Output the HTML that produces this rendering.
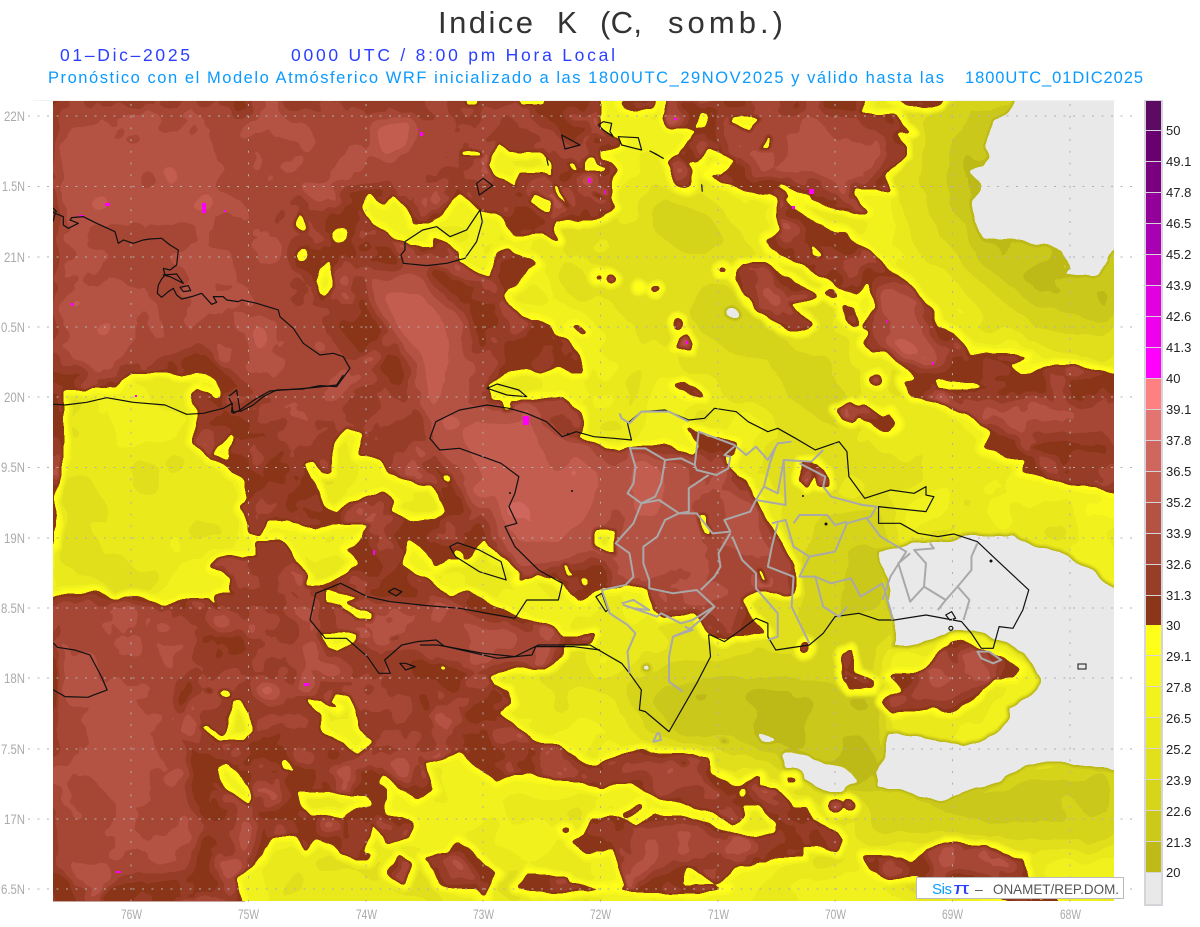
<!DOCTYPE html>
<html><head><meta charset="utf-8"><title>Indice K</title>
<style>
html,body{margin:0;padding:0;background:#fff}
svg{display:block}
.c{fill:none;stroke:#111;stroke-width:1.2;vector-effect:non-scaling-stroke;stroke-linejoin:round}
.g{fill:none;stroke:#a9a9a9;stroke-width:2;vector-effect:non-scaling-stroke;stroke-linejoin:round}
text{font-family:"Liberation Sans",sans-serif}
.ax{font-size:14px;fill:#aaa}
.cb{font-size:13px;fill:#222}
</style></head><body>
<svg width="1200" height="927" viewBox="0 0 1200 927" xmlns="http://www.w3.org/2000/svg">
<defs>
<clipPath id="mc"><rect x="53" y="101" width="1061" height="800"/></clipPath>
<filter id="post" filterUnits="userSpaceOnUse" x="0" y="0" width="1200" height="927" color-interpolation-filters="sRGB">
<feTurbulence type="fractalNoise" baseFrequency=".04" numOctaves="3" seed="3" result="n"/>
<feDisplacementMap in="SourceGraphic" in2="n" scale="9" xChannelSelector="R" yChannelSelector="G"/>
<feGaussianBlur stdDeviation="1.5"/>
<feComponentTransfer>
<feFuncR type="discrete" tableValues=".914 .745 .796 .843 .886 .914 .949 .973 1 .545 .596 .651 .706 .761 .816 .886"/>
<feFuncG type="discrete" tableValues=".914 .733 .788 .835 .878 .914 .949 .973 1 .208 .243 .282 .325 .365 .404 .459"/>
<feFuncB type="discrete" tableValues=".914 .094 .102 .102 .106 .110 .114 .110 .102 .098 .153 .208 .263 .314 .369 .439"/>
<feFuncA type="linear" slope="0" intercept="1"/>
</feComponentTransfer>
</filter>
<filter id="bF" filterUnits="userSpaceOnUse" x="0" y="0" width="1200" height="927" color-interpolation-filters="sRGB"><feGaussianBlur stdDeviation="10"/></filter>
<filter id="bB" filterUnits="userSpaceOnUse" x="0" y="0" width="1200" height="927" color-interpolation-filters="sRGB"><feGaussianBlur stdDeviation="5.5"/></filter>
<filter id="nB" filterUnits="userSpaceOnUse" x="0" y="0" width="1200" height="927" color-interpolation-filters="sRGB">
<feTurbulence type="fractalNoise" baseFrequency=".028" numOctaves="3" seed="7"/>
<feColorMatrix type="matrix" values="0 0 0 0 .82  0 0 0 0 .82  0 0 0 0 .82  2.2 0 0 0 -.95"/>
</filter>
<filter id="nF" filterUnits="userSpaceOnUse" x="0" y="0" width="1200" height="927" color-interpolation-filters="sRGB">
<feTurbulence type="fractalNoise" baseFrequency=".02" numOctaves="2" seed="11"/>
<feColorMatrix type="matrix" values="0 0 0 0 .22  0 0 0 0 .22  0 0 0 0 .22  1.5 0 0 0 -.6"/>
</filter>

<g id="B">
<polygon points="30,90 600,90 600,108 599,128 610,137 620,140 620,147 600,150 600,158 613,163 618,169 613,174 610,198 613,208 603,217 578,222 557,220 553,227 558,240 540,230 515,235 500,215 480,210 462,195 453,198 430,223 413,223 408,208 390,193 383,205 370,193 360,208 372,225 390,235 405,242 410,247 435,247 435,237 458,252 458,263 490,280 498,252 508,250 535,265 503,295 512,308 520,318 550,325 555,335 568,340 578,355 583,372 573,374 557,365 543,372 528,367 510,373 487,383 492,400 510,402 562,398 580,412 580,433 576,438 617,453 633,447 665,445 693,458 700,445 687,427 708,435 736,443 732,455 728,468 748,483 756,503 772,527 795,567 793,593 756,590 742,600 752,618 768,633 736,637 724,642 708,630 693,612 661,617 651,607 651,590 625,585 596,590 578,600 564,588 556,580 535,573 519,580 523,573 501,557 485,538 467,562 450,558 437,568 420,545 407,538 402,565 413,575 427,578 450,597 470,592 489,603 503,610 535,622 552,627 562,638 594,633 590,642 564,645 564,653 546,668 509,668 486,677 494,688 511,692 513,703 499,713 530,740 560,748 585,762 599,765 631,752 642,750 667,755 683,753 708,760 712,773 739,785 758,777 760,787 774,788 792,807 808,805 812,820 778,823 760,807 740,805 742,817 731,825 714,813 664,798 631,783 599,788 555,777 517,773 496,782 459,753 425,760 432,790 417,800 400,790 383,773 378,785 387,790 387,813 413,823 409,835 387,842 373,823 362,850 371,855 367,862 342,853 330,845 318,837 306,850 298,833 272,835 260,860 233,877 245,905 30,905"/>
<polygon points="571,843 587,833 590,820 621,817 637,827 656,813 678,815 717,827 746,837 774,835 778,820 812,820 835,832 842,838 835,850 803,845 803,858 774,858 753,865 739,867 717,883 688,865 680,885 728,887 700,893 660,893 615,887 628,888 612,848 589,853"/>
<polygon points="621,813 640,803 642,807 625,817"/>
<polygon points="560,877 571,887 606,887 581,892 560,890"/>
<polygon points="515,888 528,873 566,878 570,885 600,888 551,893"/>
<polygon points="423,860 448,853 459,840 497,873 486,897 470,890 440,883"/>
<polygon points="387,872 398,857 409,866 404,882"/>
<polygon points="864,855 903,858 912,865 928,850 946,845 981,847 1024,858 1028,877 1028,905 917,877 889,880 867,867"/>
<polygon points="1031,899 1056,899 1058,905 1031,905"/>
<ellipse cx="835" cy="806" rx="6" ry="6"/><ellipse cx="849" cy="805" rx="5" ry="5"/>
<rect x="788" y="777" width="7" height="5"/>
<ellipse cx="565" cy="831" rx="4" ry="2.5"/>
<polygon points="620,101 655,101 650,108 635,111 622,108"/>
<polygon points="893,96 945,96 940,105 925,107 905,106"/>
<polygon points="668,96 866,96 860,112 895,115 910,133 895,132 905,148 905,158 885,175 890,192 855,188 853,195 868,212 852,212 817,202 790,197 780,198 717,182 707,175 715,167 727,170 723,155 707,145 707,130 697,130 670,127 663,118"/>
<polygon points="680,155 697,132 710,130 707,145 700,163 688,165"/>
<polygon points="667,163 678,157 692,170 690,187 678,185"/>
<polygon points="780,190 788,202 797,210 810,218 825,228 847,232 868,252 897,275 913,292 933,312 937,327 955,332 970,355 987,352 1028,358 1010,365 993,358 1020,375 1067,363 1120,378 1120,495 1022,472 1027,462 983,448 992,433 970,415 913,395 902,380 918,378 887,352 873,352 862,343 870,328 862,327 877,308 870,282 857,295 838,288 807,265 780,257 765,240 780,233"/>
<polygon points="733,278 742,265 765,263 790,278 817,295 790,305 812,325 803,332 780,325 760,310"/>
<polygon points="822,292 832,290 840,298 835,300"/>
<polygon points="842,303 855,305 860,325 852,327 846,318"/>
<polygon points="835,410 850,404 858,410 865,405 883,416 890,413 897,424 887,430 880,430 860,417 852,422 842,418"/>
<ellipse cx="877" cy="380" rx="5" ry="5"/>
<polygon points="673,387 683,382 705,397 688,395"/>
<ellipse cx="678" cy="323" rx="5" ry="5"/>
<polygon points="676,347 680,336 688,334 692,342 690,348"/>
<ellipse cx="611" cy="279" rx="4" ry="4"/><ellipse cx="598" cy="277" rx="3" ry="2"/><ellipse cx="657" cy="290" rx="4" ry="2"/><ellipse cx="639" cy="288" rx="1.5" ry="2"/>
<polygon points="571,326 578,326 586,332 580,332"/>
<ellipse cx="723" cy="270" rx="3" ry="3"/>
<polygon points="954,640 965,637 977,650 1001,657 1021,670 1013,677 993,680 981,693 965,705 950,712 934,705 894,713 882,703 902,692 890,675 918,673 934,660"/>
<polygon points="843,653 851,650 855,673 876,683 875,690 849,690 842,680"/>
<polygon points="802,462 812,462 812,475 806,486 800,480"/><polygon points="815,463 824,470 826,485 818,483"/>
<ellipse cx="804" cy="649" rx="4" ry="4"/>
<ellipse cx="136" cy="396" rx="6" ry="6.5"/><ellipse cx="139" cy="410" rx="3" ry="2.5"/>
</g>

<g id="H">
<polygon points="63,390 115,388 120,380 133,372 157,372 173,375 197,372 217,382 220,397 213,400 197,388 193,395 198,415 193,440 212,460 227,468 245,482 247,500 240,508 248,522 248,532 260,535 267,520 290,522 317,527 363,522 373,525 363,538 347,550 358,562 347,575 337,582 315,588 303,588 307,575 293,555 280,538 257,542 257,555 250,557 227,557 210,567 230,575 228,588 237,593 217,595 220,612 209,598 180,602 161,607 138,595 115,600 100,593 65,595 53,597 48,600 48,548 53,545 56,525 53,507 60,468 63,442"/>
<polygon points="305,463 317,458 323,473 330,472 332,445 347,427 363,435 357,455 380,460 390,472 423,485 432,483 445,512 433,522 407,518 388,512 395,502 383,493 363,498 350,503 337,513 323,507 315,482"/>
<polygon points="213,455 232,432 237,435 228,450 228,462 213,458"/>
<ellipse cx="446" cy="478" rx="4.5" ry="4"/>
<polygon points="498,142 510,150 540,153 552,163 552,177 537,173 520,173 515,188 505,183 493,175 487,165 490,155"/>
<polygon points="553,182 560,185 570,208 565,208 557,198"/>
<polygon points="530,202 537,193 552,200 552,217 543,213"/>
<polygon points="566,162 572,160 577,168 584,169 583,160 587,155 595,154 597,163 603,166 610,163 603,172 583,172 572,170"/>
<polygon points="593,192 598,192 605,197 600,199"/>
<polygon points="459,150 483,150 483,157 462,158"/>
<polygon points="463,95 480,95 478,105 466,107"/><polygon points="513,95 548,95 545,106 520,106"/>
<ellipse cx="340" cy="235" rx="8" ry="8"/>
<polygon points="295,227 300,212 305,218 307,228 303,231"/>
<ellipse cx="303" cy="255" rx="4.5" ry="8"/>
<polygon points="313,283 330,258 335,285 327,298 318,295"/>
<polygon points="325,590 363,598 346,603 373,613 371,622 356,620 342,607 325,603"/>
<polygon points="320,635 350,630 360,632 354,642 337,652 327,647"/>
<polygon points="203,686 212,688 212,692 206,692"/><ellipse cx="226" cy="693" rx="6" ry="5"/>
<polygon points="232,700 239,698 251,713 253,733 245,742 220,742 199,727 207,723 222,735 230,720"/>
<polygon points="304,698 321,700 329,705 339,710 330,703 337,692 352,697 360,727 373,743 358,755 337,742 321,730 320,717"/>
<polygon points="216,767 228,763 241,773 254,797 249,805 233,798 218,780"/>
<polygon points="279,762 285,757 297,773 284,770"/>
<polygon points="295,793 325,790 367,797 373,803 356,810 341,820 329,817 310,817"/>
<polygon points="342,823 346,823 350,838 347,837"/>
<rect x="390" y="637" width="9" height="2"/><ellipse cx="443" cy="668" rx="3" ry="3"/>
<polygon points="53,660 55,660 56,710 53,710"/>
<polygon points="594,527 615,527 616,555 594,547"/>
<polygon points="560,563 567,565 576,577 566,577"/><ellipse cx="585" cy="581" rx="5" ry="4"/>
<polygon points="454,548 462,553 465,560 455,556"/>
<polygon points="497,393 510,398 512,408 504,410"/>
<polygon points="697,512 707,513 710,535 702,535"/>
<polygon points="758,567 764,568 766,583 760,582"/>
<polygon points="724,455 732,456 731,467 725,466"/>
<polygon points="808,242 823,255 823,260 813,255"/>
<polygon points="935,380 980,385 1013,393 983,388 937,392"/>
<rect x="1030" y="444" width="12" height="3"/>
<polygon points="780,183 788,185 812,198 800,210 787,192 780,190"/>
<polygon points="695,128 700,114 708,114 705,128"/><polygon points="730,115 760,118 752,130 730,124"/><polygon points="760,150 768,135 772,138 770,148"/>
<polygon points="707,175 716,167 727,170 720,176"/>
<polygon points="717,165 723,155 735,160 728,170"/>
<ellipse cx="744" cy="792" rx="3.5" ry="4"/>
<rect x="680" y="761" width="6" height="2"/>
<rect x="177" y="894" width="16" height="2"/>
</g>
<mask id="m1" maskUnits="userSpaceOnUse" x="0" y="0" width="1200" height="927"><use href="#B" fill="#fff"/><use href="#H" fill="#000"/></mask>
<mask id="m2" maskUnits="userSpaceOnUse" x="0" y="0" width="1200" height="927"><rect width="1200" height="927" fill="#fff"/><use href="#H" fill="#000" stroke="#fff" stroke-width="7" stroke-linejoin="round"/></mask>
<mask id="m3" maskUnits="userSpaceOnUse" x="0" y="0" width="1200" height="927"><rect width="1200" height="927" fill="#fff"/><use href="#H" fill="#000" stroke="#fff" stroke-width="13" stroke-linejoin="round"/></mask>
</defs>
<rect width="1200" height="927" fill="#fff"/>

<g clip-path="url(#mc)">
<g filter="url(#post)">
<rect width="1200" height="927" fill="#686868"/>
<!-- yellow / olive field -->
<g filter="url(#bF)">
<polygon points="40,440 190,430 240,520 210,580 40,595" fill="#606060"/>
<polygon points="60,470 140,455 170,520 110,590 50,590" fill="#585858"/>
<polygon points="70,490 120,490 125,545 75,570" fill="#505050"/>
<polygon points="260,850 480,850 620,905 270,905" fill="#585858"/>
<polygon points="470,610 600,640 600,720 500,720" fill="#585858"/>
<polygon points="540,240 640,170 720,190 830,270 930,380 1000,470 900,500 880,620 890,860 720,830 600,730 620,640 800,500 780,420 640,370 570,300" fill="#585858"/>
<polygon points="600,260 650,210 700,200 760,260 840,340 860,420 830,520 860,640 880,800 780,780 640,700 660,650 780,560 770,420 690,360 620,320" fill="#484848"/>
<polygon points="640,195 700,200 730,235 700,255 660,240" fill="#383838"/>
<polygon points="700,280 770,300 790,350 730,355 690,320" fill="#383838"/>
<polygon points="780,340 860,400 850,440 790,400" fill="#383838"/>
<polygon points="810,520 890,500 900,640 860,660 800,640" fill="#383838"/>
<polygon points="830,550 885,540 890,610 840,620" fill="#282828"/>
<polygon points="610,680 740,655 880,650 890,800 830,800 760,760 640,735" fill="#383838"/>
<polygon points="650,695 730,680 880,690 895,790 840,790 770,745 670,728" fill="#181818"/>
<polygon points="870,790 1120,750 1120,850 860,840" fill="#383838"/>
<polygon points="890,800 1000,780 1120,765 1120,825 1000,825" fill="#282828"/>
<polygon points="880,101 985,96 1120,235 1120,370 1040,350 960,300 900,220 880,150" fill="#484848"/>
<polygon points="925,96 1020,96 1120,235 1120,340 1040,325 970,275 925,200" fill="#383838"/>
<polygon points="955,96 1020,96 1120,240 1120,325 1040,308 985,265 950,200" fill="#282828"/>
<polygon points="975,125 1020,96 1000,240 1120,255 1120,318 1040,300 990,262 955,200 955,150" fill="#181818"/>
<polygon points="1070,460 1120,500 1120,560 1060,540" fill="#787878"/>
</g>
<rect width="1200" height="927" filter="url(#nF)"/>
<!-- grey < 20 -->
<g fill="#080808">
<polygon points="1013,101 1007,112 993,118 990,128 983,145 990,155 983,167 969,171 980,185 979,192 972,200 974,222 983,238 1013,242 1047,245 1063,252 1070,268 1058,276 1100,275 1107,258 1125,245 1125,95 1016,95"/>
<ellipse cx="733" cy="312" rx="9" ry="7.5"/>
<polygon points="876,552 910,543 930,542 946,540 973,532 1013,535 1040,545 1060,550 1125,590 1125,772 1049,762 1024,768 981,790 939,803 903,792 874,788 876,770 883,757 887,730 917,735 963,743 996,733 1009,717 1005,707 1025,695 1040,680 1033,670 1021,653 989,637 961,630 934,643 890,648 894,620 887,600 890,590 882,567"/>
<polygon points="781,758 785,753 806,755 846,767 860,782 846,790 846,800 826,792 803,780 790,775"/>
<polygon points="755,733 768,733 777,740 763,741"/><ellipse cx="724" cy="742" rx="3" ry="1.5"/>
<ellipse cx="646" cy="667" rx="5" ry="5"/>
</g>
<!-- halo -->
<g mask="url(#m3)"><use href="#B" fill="#787878" stroke="#787878" stroke-width="13" stroke-linejoin="round"/></g>
<g mask="url(#m2)"><use href="#B" fill="#888888" stroke="#888888" stroke-width="7" stroke-linejoin="round"/></g>
<!-- brown -->
<g mask="url(#m1)">
<use href="#B" fill="#989898"/>
<g filter="url(#bB)">
<!-- L10 -->
<g fill="#a8a8a8">
<polygon points="250,100 520,100 590,160 500,200 420,180 350,190 290,260 340,330 400,390 430,480 370,520 250,420 230,250"/>
<polygon points="190,520 300,540 310,600 400,620 420,700 440,760 390,770 300,740 250,700 250,640 190,600"/>
<polygon points="200,660 360,640 420,700 400,760 300,720 270,740 210,710"/>
<polygon points="970,400 1120,405 1120,445 1040,440 985,430"/>
<polygon points="1065,450 1120,455 1120,475 1070,470"/>
<polygon points="650,590 720,590 735,630 700,610"/>
</g>
<!-- L11 -->
<g fill="#b8b8b8">
<polygon points="55,105 220,105 230,115 300,110 420,120 460,115 440,170 400,180 340,190 300,190 270,220 290,240 285,300 320,320 340,355 345,400 300,410 250,390 200,345 130,365 55,372"/>
<polygon points="55,600 150,605 200,640 175,690 185,770 200,830 190,875 90,880 55,860"/>
<polygon points="330,600 400,600 450,605 540,635 565,650 540,665 460,665 400,650 340,640"/>
<polygon points="630,450 700,450 760,500 790,570 785,600 750,590 735,640 700,610 660,610 610,560"/>
<polygon points="360,265 430,275 470,320 490,430 600,440 640,500 610,560 520,575 430,450 400,350"/>
<polygon points="720,110 860,115 890,150 880,175 830,185 760,175 720,140"/>
<polygon points="875,278 893,282 927,322 950,362 940,372 913,365 873,345 867,335 873,308"/>
<polygon points="963,398 1047,402 1114,415 1114,432 1047,432 997,418"/>
<polygon points="930,668 990,662 1000,675 950,705 900,700"/>
<polygon points="628,760 650,758 680,768 706,775 710,790 670,793 642,773 603,783 560,767 560,756 603,777"/>
<polygon points="760,790 780,800 790,815 772,805"/>
<polygon points="628,833 667,820 713,833 746,843 739,853 685,857 667,870 631,880"/>
<polygon points="950,850 1022,860 1022,872 940,870"/>
<polygon points="880,860 905,862 905,872 888,870"/>
<polygon points="436,868 458,852 480,880 450,880"/>
<polygon points="690,165 690,185 680,183 672,168"/>
</g>
<!-- L12 -->
<g fill="#c8c8c8">
<polygon points="65,130 95,125 120,150 160,130 200,150 230,170 240,210 170,225 130,220 95,220 65,230"/>
<polygon points="70,290 125,285 135,340 110,370 70,360"/>
<polygon points="185,245 230,250 240,285 195,280"/>
<polygon points="85,720 120,680 145,720 150,800 120,810 95,780"/>
<polygon points="60,660 95,650 100,690 65,700"/>
<polygon points="360,275 420,285 460,320 470,400 440,410 410,350 375,315"/>
<polygon points="440,410 520,400 560,430 620,470 610,520 570,560 520,570 490,510 470,470 430,450"/>
<polygon points="625,450 690,470 680,530 700,555 650,580 610,560 630,510"/>
<polygon points="720,480 755,510 770,560 730,540"/>
<polygon points="448,620 490,627 520,633 517,650 490,647"/>
<polygon points="800,125 820,120 835,140 870,150 850,180 800,170"/>
<polygon points="880,288 897,292 913,315 890,322 877,312"/>
<polygon points="760,795 782,803 790,812 770,807"/>
<polygon points="645,838 655,838 658,860 645,858"/>
<polygon points="207,614 235,615 235,633 215,630"/>
<polygon points="240,815 260,820 250,860 232,845"/>
<polygon points="985,850 1020,860 1015,870 990,865"/>
<polygon points="970,415 1005,420 985,425"/>
</g>
<!-- L13 -->
<g fill="#d8d8d8">
<polygon points="370,125 410,115 420,130 390,165 378,150"/>
<polygon points="385,290 430,300 450,340 440,400 430,420 420,350 390,320"/>
<polygon points="460,430 530,420 550,470 600,470 590,510 560,540 520,540 500,500 480,470"/>
<polygon points="635,455 665,470 660,510 640,520 630,490"/>
<polygon points="245,330 265,315 270,345 258,360"/>
<polygon points="255,680 285,690 270,705"/>
<polygon points="880,600 925,590 925,680"/>
<polygon points="880,342 905,335 930,360 895,352"/>
<circle cx="100" cy="205" r="9"/><circle cx="170" cy="175" r="9"/><circle cx="205" cy="205" r="10"/><circle cx="75" cy="305" r="8"/><circle cx="105" cy="330" r="8"/>
<circle cx="528" cy="408" r="9"/><circle cx="450" cy="422" r="10"/>
<circle cx="306" cy="684" r="9"/><circle cx="333" cy="668" r="9"/><circle cx="344" cy="770" r="8"/><circle cx="402" cy="770" r="8"/><circle cx="329" cy="825" r="8"/><circle cx="103" cy="872" r="7"/>
<circle cx="675" cy="119" r="8"/><circle cx="678" cy="170" r="7"/><circle cx="768" cy="157" r="6"/><circle cx="780" cy="202" r="7"/><circle cx="865" cy="180" r="6"/>
<circle cx="896" cy="700" r="7"/><circle cx="938" cy="682" r="6"/>
<circle cx="744" cy="847" r="8"/><circle cx="758" cy="845" r="5"/><circle cx="935" cy="858" r="5"/><circle cx="952" cy="855" r="4"/><circle cx="981" cy="852" r="5"/><circle cx="1006" cy="863" r="5"/>
<circle cx="835" cy="806" r="4"/><circle cx="849" cy="805" r="3"/><circle cx="136" cy="396" r="3"/><circle cx="684" cy="342" r="5"/><circle cx="590" cy="180" r="7"/><circle cx="605" cy="192" r="5"/>
<polygon points="530,618 552,625 560,640 545,640"/>
</g>
<!-- L14 -->
<g fill="#e8e8e8">
<polygon points="500,505 530,500 555,525 540,535 510,525"/>
<circle cx="479" cy="490" r="8"/><circle cx="575" cy="470" r="9"/><circle cx="264" cy="690" r="7"/><circle cx="925" cy="358" r="6"/><circle cx="908" cy="348" r="5"/>
</g>
<!-- dark spots -->
<circle cx="148" cy="180" r="7" fill="#a8a8a8"/><circle cx="225" cy="185" r="9" fill="#a8a8a8"/><circle cx="415" cy="128" r="4" fill="#a8a8a8"/>
</g>
<rect width="1200" height="927" filter="url(#nB)"/>
</g>
</g>

<!-- magenta -->
<g fill="#ff00ff">
<rect x="105" y="203" width="5" height="3"/><rect x="202" y="203" width="4" height="10"/><rect x="224" y="210" width="2" height="2"/><rect x="79" y="215" width="5" height="1.5"/><rect x="71" y="303" width="3" height="3"/><rect x="420" y="132" width="3" height="4"/><rect x="417" y="129" width="2" height="1"/><rect x="674" y="118" width="3" height="2"/><rect x="588" y="178" width="3" height="5"/><rect x="604" y="190" width="1.5" height="4"/><rect x="686" y="341" width="2" height="3"/><rect x="809" y="189" width="5" height="5"/><rect x="792" y="206" width="3" height="3"/><rect x="886" y="320" width="1.5" height="3"/><rect x="932" y="362" width="2" height="3"/><rect x="523" y="416" width="6" height="9"/><rect x="304" y="683" width="5" height="3"/><rect x="116" y="871" width="5" height="2"/><rect x="373" y="550" width="2" height="5"/><rect x="135" y="395" width="2" height="2"/>
</g>

<!-- coasts -->
<g transform="translate(0,95) scale(.3333)">
<polyline class="c" points="105,335 108,325 130,325 160,340 170,350 145,355 140,365 160,378 165,355 190,365 190,390 205,400 235,385 210,375 215,368 250,365 290,385 345,410 355,445 370,435 400,445 430,435 450,432 485,430 510,450 535,465 530,510 510,525 490,520 495,540 485,552 475,570 472,595 485,607 505,590 520,580 530,600 545,612 575,605 605,595 635,628 650,622 640,605 670,605 680,615 715,620 725,615 770,625 835,645 840,665 880,700 910,745 960,780 1000,775 1030,785 1050,820 1010,875 960,872 910,882 830,885 790,905 760,930 720,950"/>
<polygon class="c" points="490,540 530,537 550,565 510,545"/>
<polygon class="c" points="540,577 565,572 572,587 550,590"/>
<polygon class="c" points="1430,265 1450,250 1478,272 1438,300"/>
<polygon class="c" points="1215,440 1268,405 1310,395 1350,425 1400,405 1440,345 1447,380 1430,440 1395,490 1340,505 1280,512 1210,505 1203,480 1215,465"/>
</g>
<g transform="translate(30,375) scale(.3333)">
<polyline class="c" points="940,0 920,30 850,38 720,48 680,70 630,105 610,115 605,85 595,65 620,45 630,108 605,112 607,85 580,100 520,115 470,118 405,90 310,82 230,68 170,82 105,90 60,87 15,97"/>
</g>
<g transform="translate(440,95) scale(.3333)">
<polygon class="c" points="365,120 420,150 375,162"/>
<polygon class="c" points="475,90 490,80 515,85 510,110 520,125 490,105"/>
<polygon class="c" points="535,125 595,128 605,165 545,150"/>
<polygon class="c" points="630,168 670,190 650,178"/>
<polyline class="c" points="320,190 325,212"/><polyline class="c" points="785,268 787,290"/>
</g>
<g transform="translate(0,560) scale(.3827,.3333)">
<polyline class="c" points="1100,135 1020,125 960,110 890,70 825,100 810,180 850,235 905,235 960,290 990,340 1020,340 1005,300 1050,255 1090,245 1140,240 1160,258 1300,295 1390,285 1400,260 1500,260 1568,270"/>
<polygon class="c" points="1015,95 1030,85 1050,95 1035,108"/>
<polygon class="c" points="1045,310 1060,310 1085,320 1060,330"/>
<polyline class="c" points="90,218 105,240 140,250 150,262 195,270 235,285 265,350 280,390 245,405 230,412 170,410 140,390 105,382 95,370 105,380 90,365"/>
</g>
<g transform="translate(420,380) scale(.3953,.3333)">
<polyline class="c" points="0,675 100,685 240,715 270,660 350,660 360,610 300,570 240,500 215,440 245,430 225,380 240,340 250,290 205,250 100,205 50,210 25,175 40,125 100,90 170,75 225,85 270,100 320,125 360,170 395,155 440,170 490,175 535,180 525,130 560,95 620,90 680,120 720,115 745,85 800,95 830,125 880,155 905,145 950,175 1000,210 1060,185 1080,215 1085,290 1125,355 1190,330 1250,340 1280,320 1280,345 1300,350 1280,395 1160,380 1160,430 1215,430 1260,460 1310,470 1350,462 1410,485 1450,530 1540,630 1525,690 1500,745 1465,740 1450,805 1420,805 1395,760 1370,725 1280,705 1200,720 1160,720 1110,700 1050,710 1020,760 985,795 900,810 880,770 880,730 850,715 800,760 770,785 735,765 730,765 735,830 700,910 630,1055 570,995 555,990 560,930 530,880 510,850 430,795 300,795 240,830 160,820 45,795 0,795"/>
<polygon class="c" points="75,500 95,488 150,510 205,545 218,600 150,575 90,530"/>
<polygon class="c" points="170,25 195,12 250,30 270,50 220,45"/>
<polygon class="c" points="1410,815 1440,815 1470,840 1450,850 1420,835"/>
<polygon class="c" points="1330,705 1345,695 1355,715 1340,720"/>
<ellipse class="c" cx="1343" cy="745" rx="5" ry="6"/>
<polygon class="c" points="460,640 475,690 470,695 445,650"/>
<polyline class="g" points="530,200 545,260 540,310 525,340 560,370 540,430 495,490 530,520 540,590 520,615 460,630 480,700 525,735 545,760 525,815 530,880"/>
<polyline class="g" points="505,100 510,115 530,130 560,95 630,95 680,125"/>
<polyline class="g" points="530,205 570,205 620,240 660,235 695,255 705,155 795,195 825,225 850,200 880,240 905,190 940,185"/>
<polyline class="g" points="620,240 610,310 595,350 560,370 605,360 655,400 620,420 600,470 565,500 565,550 580,600 580,625 640,640 700,630 745,680 715,715 680,750 640,770 630,830 630,905 665,935"/>
<polyline class="g" points="695,255 700,270 750,285 780,265 785,230 770,225 795,200"/>
<polyline class="g" points="730,285 680,325 680,395 655,400 700,400 740,460 785,455 770,420 835,395 850,360 870,320 885,250 900,200"/>
<polyline class="g" points="785,460 755,520 760,560 745,590 710,630"/>
<polyline class="g" points="790,470 815,540 850,580 850,625 905,700 905,770 880,780"/>
<polyline class="g" points="850,360 925,375 920,240 990,245 1020,210"/>
<polyline class="g" points="870,320 905,340 920,240"/>
<polyline class="g" points="905,430 890,500 880,560 945,590 940,680 985,790"/>
<polyline class="g" points="890,430 925,420 945,500 985,530 960,590 1000,590 1020,680 1060,710 1080,680"/>
<polyline class="g" points="985,530 1050,515 1080,430 1140,410 1155,380 1120,375 1040,350 1020,320 1025,290 960,250"/>
<polyline class="g" points="945,430 960,405 1030,405 1050,435 1080,425"/>
<polyline class="g" points="1000,590 1040,610 1090,595 1115,650 1170,610 1190,690 1195,720"/>
<polyline class="g" points="1130,415 1165,470 1230,515 1190,590 1170,660"/>
<polyline class="g" points="1240,520 1210,550 1240,665 1275,620 1280,550 1250,510 1300,505 1290,490"/>
<polyline class="g" points="1275,620 1330,660 1360,620 1390,660 1375,720"/>
<polyline class="g" points="1410,490 1395,530 1395,570 1360,620"/>
<polyline class="g" points="1330,660 1310,690"/>
<polyline class="g" points="510,670 540,660 580,690 540,685 515,675 600,710 610,700 660,730 690,720 730,690 745,680"/>
<polyline class="g" points="670,740 690,750 640,770"/>
<polygon class="g" points="600,1060 590,1085 610,1080 605,1060"/>
<polygon class="g" points="1410,815 1440,815 1470,840 1450,850 1420,835"/>
</g>
<g fill="#111"><rect x="1078" y="664" width="8" height="5" fill="none" stroke="#111"/>
<circle cx="572" cy="491" r="1"/><circle cx="510" cy="493" r="1"/><circle cx="568" cy="434" r="1"/><circle cx="826" cy="524" r="1.5"/><circle cx="803" cy="496" r="1"/><circle cx="991" cy="561" r="1.5"/></g>
</g>

<!-- grid -->
<g stroke="#b0b0b0" stroke-width="1" stroke-dasharray="2 7.5" fill="none">
<path d="M28 116H1136M28 186.5H1136M28 257H1136M28 327H1136M28 397H1136M28 467.5H1136M28 538H1136M28 608H1136M28 678H1136M28 749H1136M28 819H1136M28 889H1136"/>
</g>
<g stroke="#b0b0b0" stroke-width="1" stroke-dasharray="2 9.7" fill="none">
<path d="M131 104V907M248.500 104V907M366 104V907M483 104V907M600.500 104V907M718 104V907M835 104V907M952.500 104V907M1070 104V907"/>
</g>
<path d="M33 100.500H1115" stroke="#f2f2f2" stroke-width="1"/>
<path d="M53 901.500H245" stroke="#c7a3a0" stroke-width="1"/>

<!-- footer box -->
<rect x="916.500" y="877.500" width="207" height="21" fill="#fff" stroke="#bbb"/>
<text x="932" y="894" font-size="15" fill="#0a9aff" textLength="20" lengthAdjust="spacing">Sis</text>
<text x="953" y="894" font-size="17" fill="#2b3fff" textLength="17" lengthAdjust="spacingAndGlyphs">π</text>
<text x="975" y="894" font-size="14" fill="#555">–</text>
<text x="993" y="894" font-size="14" fill="#555" textLength="126" lengthAdjust="spacingAndGlyphs">ONAMET/REP.DOM.</text>

<!-- titles -->
<g fill="#333" font-size="31">
<text x="438" y="33" textLength="95" lengthAdjust="spacing">Indice</text>
<text x="557" y="33" textLength="20" lengthAdjust="spacingAndGlyphs">K</text>
<text x="600" y="33" textLength="42" lengthAdjust="spacing">(C,</text>
<text x="668" y="33" textLength="115" lengthAdjust="spacing">somb.)</text>
</g>
<g fill="#2b3fff" font-size="17.500">
<text x="60" y="61" textLength="130" lengthAdjust="spacing">01–Dic–2025</text>
<text x="291" y="61" textLength="324" lengthAdjust="spacing">0000 UTC / 8:00 pm Hora Local</text>
</g>
<g fill="#0a9aff" font-size="16.500">
<text x="48" y="83" textLength="896" lengthAdjust="spacing">Pronóstico con el Modelo Atmósferico WRF inicializado a las 1800UTC_29NOV2025 y válido hasta las</text>
<text x="965" y="83" textLength="178" lengthAdjust="spacing">1800UTC_01DIC2025</text>
</g>

<!-- axis labels -->
<g class="ax">
<text x="4" y="121" textLength="21" lengthAdjust="spacingAndGlyphs">22N</text>
<text x="2" y="191" textLength="23" lengthAdjust="spacingAndGlyphs">1.5N</text>
<text x="4" y="262" textLength="21" lengthAdjust="spacingAndGlyphs">21N</text>
<text x="1" y="332" textLength="24" lengthAdjust="spacingAndGlyphs">0.5N</text>
<text x="4" y="402" textLength="21" lengthAdjust="spacingAndGlyphs">20N</text>
<text x="1" y="472" textLength="24" lengthAdjust="spacingAndGlyphs">9.5N</text>
<text x="4" y="543" textLength="21" lengthAdjust="spacingAndGlyphs">19N</text>
<text x="1" y="613" textLength="24" lengthAdjust="spacingAndGlyphs">8.5N</text>
<text x="4" y="683" textLength="21" lengthAdjust="spacingAndGlyphs">18N</text>
<text x="1" y="754" textLength="24" lengthAdjust="spacingAndGlyphs">7.5N</text>
<text x="4" y="824" textLength="21" lengthAdjust="spacingAndGlyphs">17N</text>
<text x="1" y="894" textLength="24" lengthAdjust="spacingAndGlyphs">6.5N</text>
<text x="121" y="919" textLength="21" lengthAdjust="spacingAndGlyphs">76W</text>
<text x="238" y="919" textLength="21" lengthAdjust="spacingAndGlyphs">75W</text>
<text x="356" y="919" textLength="21" lengthAdjust="spacingAndGlyphs">74W</text>
<text x="473" y="919" textLength="21" lengthAdjust="spacingAndGlyphs">73W</text>
<text x="590" y="919" textLength="21" lengthAdjust="spacingAndGlyphs">72W</text>
<text x="708" y="919" textLength="21" lengthAdjust="spacingAndGlyphs">71W</text>
<text x="825" y="919" textLength="21" lengthAdjust="spacingAndGlyphs">70W</text>
<text x="942" y="919" textLength="21" lengthAdjust="spacingAndGlyphs">69W</text>
<text x="1060" y="919" textLength="21" lengthAdjust="spacingAndGlyphs">68W</text>
</g>

<!-- colour bar -->
<rect x="1144" y="100" width="19" height="806" fill="#d6d4da"/>
<g>
<rect x="1146" y="101" width="15" height="29" fill="#5c0a62"/>
<rect x="1146" y="131" width="15" height="30" fill="#690070"/>
<rect x="1146" y="162" width="15" height="30" fill="#7a0080"/>
<rect x="1146" y="193" width="15" height="30" fill="#94009a"/>
<rect x="1146" y="224" width="15" height="30" fill="#aa00b4"/>
<rect x="1146" y="255" width="15" height="30" fill="#c800c8"/>
<rect x="1146" y="286" width="15" height="30" fill="#e000e0"/>
<rect x="1146" y="317" width="15" height="30" fill="#ee00ee"/>
<rect x="1146" y="348" width="15" height="30" fill="#ff00ff"/>
<rect x="1146" y="379" width="15" height="30" fill="#ff8080"/>
<rect x="1146" y="410" width="15" height="30" fill="#e27570"/>
<rect x="1146" y="441" width="15" height="30" fill="#d0675e"/>
<rect x="1146" y="472" width="15" height="30" fill="#c25d50"/>
<rect x="1146" y="503" width="15" height="30" fill="#b45343"/>
<rect x="1146" y="534" width="15" height="30" fill="#a64835"/>
<rect x="1146" y="565" width="15" height="30" fill="#983e27"/>
<rect x="1146" y="596" width="15" height="29" fill="#8b3519"/>
<rect x="1146" y="625" width="15" height="30" fill="#ffff1a"/>
<rect x="1146" y="656" width="15" height="30" fill="#f8f81c"/>
<rect x="1146" y="687" width="15" height="30" fill="#f2f21d"/>
<rect x="1146" y="718" width="15" height="30" fill="#e9e91c"/>
<rect x="1146" y="749" width="15" height="30" fill="#e2e01b"/>
<rect x="1146" y="780" width="15" height="30" fill="#d7d51a"/>
<rect x="1146" y="811" width="15" height="30" fill="#cbc91a"/>
<rect x="1146" y="842" width="15" height="30" fill="#bebb18"/>
<rect x="1146" y="873" width="15" height="31" fill="#e9e9e9"/>
</g>
<g class="cb">
<text x="1166" y="135">50</text><text x="1166" y="166">49.1</text><text x="1166" y="197">47.8</text><text x="1166" y="228">46.5</text><text x="1166" y="259">45.2</text><text x="1166" y="290">43.9</text><text x="1166" y="321">42.6</text><text x="1166" y="352">41.3</text><text x="1166" y="383">40</text><text x="1166" y="414">39.1</text><text x="1166" y="445">37.8</text><text x="1166" y="476">36.5</text><text x="1166" y="507">35.2</text><text x="1166" y="538">33.9</text><text x="1166" y="569">32.6</text><text x="1166" y="600">31.3</text><text x="1166" y="630">30</text><text x="1166" y="661">29.1</text><text x="1166" y="692">27.8</text><text x="1166" y="723">26.5</text><text x="1166" y="754">25.2</text><text x="1166" y="785">23.9</text><text x="1166" y="816">22.6</text><text x="1166" y="847">21.3</text><text x="1166" y="877">20</text>
</g>
</svg>
</body></html>
